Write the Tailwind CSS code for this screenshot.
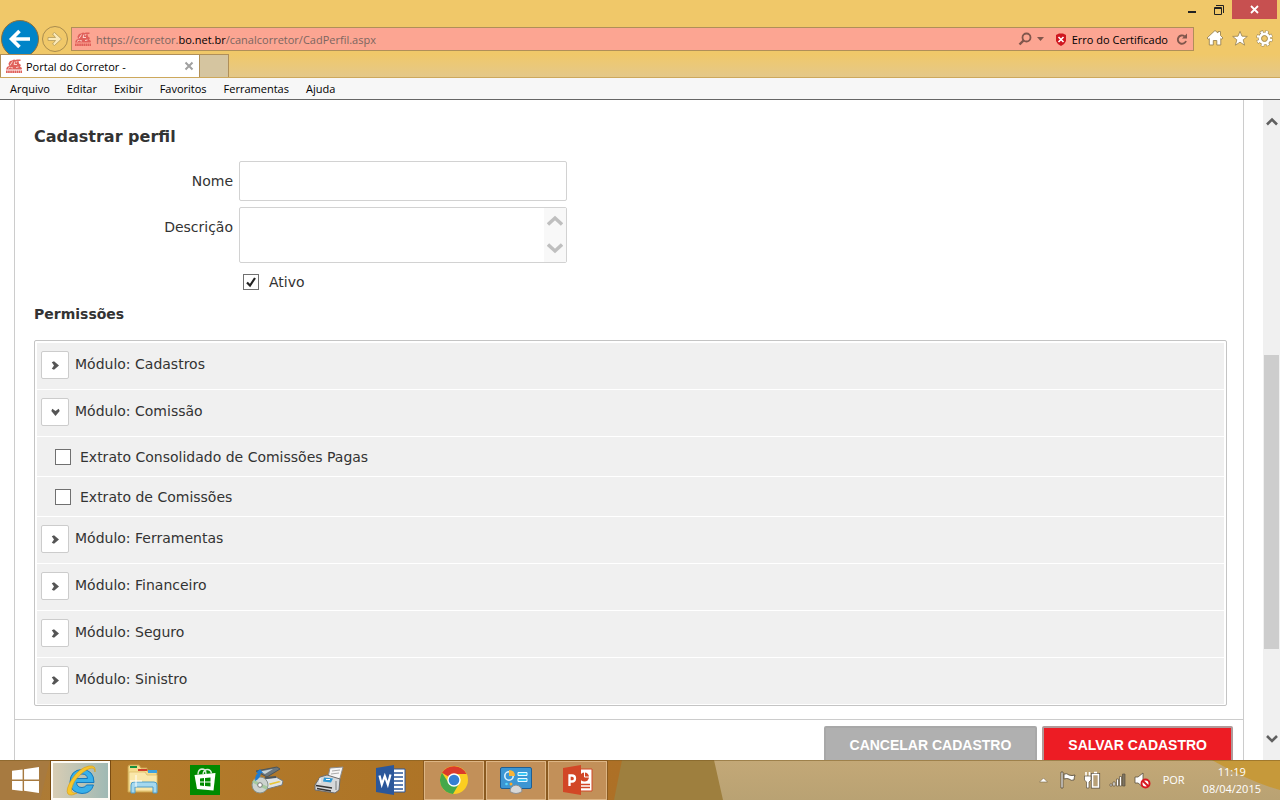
<!DOCTYPE html>
<html lang="pt-BR">
<head>
<meta charset="utf-8">
<title>Portal do Corretor -</title>
<script src="https://cdn.jsdelivr.net/npm/@tailwindcss/browser@4"></script>
</head>
<body class="h-screen flex flex-col overflow-hidden bg-white font-['Open_Sans',sans-serif] text-xs text-black">

<svg class="hidden" aria-hidden="true">
  <symbol id="lion" viewBox="0 0 16 15">
    <path d="M0 11L1 8.500 3 7.500 2.500 5 4 2.500 6 2 8 1 9.500 1.500 11 1H14.500V2.500H12.500L13 5 15 6.500 14 8 16 9.500 15.500 11Z" fill="#e0605a"/>
    <path d="M4 7L6.500 3M7 9.500L4.500 9M9 3L8 6 11 6M2 10L4 8.500M10 9L12.500 8.500M11 2.500L10.500 4" stroke="#fbd3cb" stroke-width="1" fill="none"/>
    <path d="M0 13.200H16" stroke="#e0605a" stroke-width="2.600" stroke-dasharray="1.700 .4"/>
  </symbol>
  <symbol id="chev-right" viewBox="0 0 9 9"><path d="M.8 1.300L3 .3 8 4.500 3 8.700 .8 7.700 3 4.500z" fill="#555"/></symbol>
  <symbol id="chev-down" viewBox="0 0 9 9"><path d="M1.300 .8L.3 3 4.500 8 8.700 3 7.700 .8 4.500 3z" fill="#555"/></symbol>
</svg>

<header class="shrink-0 bg-[#f0c869]">
  <div class="flex h-5 justify-end pr-[3px]">
    <button aria-label="Minimizar" class="w-[26px] flex items-center justify-center"><svg width="10" height="14" viewBox="0 0 10 14"><path d="M1 8h8v2H1z" fill="#222"/></svg></button>
    <button aria-label="Restaurar" class="w-[27px] flex items-center justify-center"><svg width="12" height="12" viewBox="0 0 12 12" fill="none" stroke="#222"><path d="M3 1.500h7.500V9"/><path d="M1.500 3.500h7V10.500h-7z"/><path d="M1 4.500h7"/></svg></button>
    <button aria-label="Fechar" class="w-[45px] h-[19px] bg-[#c75050] flex items-center justify-center"><svg width="9" height="9" viewBox="0 0 9 9"><path d="M1 1l7 7M8 1L1 8" stroke="#fff" stroke-width="1.800"/></svg></button>
  </div>
  <div class="flex h-[34px] items-center">
    <button aria-label="Voltar" class="w-10 h-[34px] shrink-0"><svg width="40" height="34" viewBox="0 0 40 34"><circle cx="20" cy="19" r="18.500" fill="#0084c8" stroke="#8a6f3c"/><path d="M30 19H12M19.500 11l-8 8 8 8" fill="none" stroke="#fff" stroke-width="3.600"/></svg></button>
    <button aria-label="Avançar" class="w-[31px] h-[34px] shrink-0"><svg width="31" height="34" viewBox="0 0 31 34"><circle cx="15" cy="19" r="12.500" fill="none" stroke="#a98c4e"/><path d="M8 17.500h7.500l-3-3.500 2-1.500 7 6.500-7 6.500-2-1.500 3-3.500H8z" fill="#fbe9b8" stroke="#b39a5c" stroke-width=".8"/></svg></button>
    <div class="mt-1 flex flex-1 h-6 items-center border border-[#b08f58] bg-[#fca592] pl-[3px] pr-[5px]">
      <svg class="w-4 h-4 shrink-0"><use href="#lion"/></svg>
      <div role="textbox" aria-label="Endereço" class="flex-1 ml-[5px] pt-px whitespace-nowrap text-[11px] leading-5 text-[#7b6660]">https://corretor.<span class="text-black">bo.net.br</span>/canalcorretor/CadPerfil.aspx</div>
      <button aria-label="Pesquisar" class="flex items-center gap-[5px]"><svg width="14" height="14" viewBox="0 0 14 14"><circle cx="8.500" cy="5.500" r="4" fill="none" stroke="#80564c" stroke-width="1.800"/><path d="M5.500 8.500L1.500 12.500" stroke="#80564c" stroke-width="2.400"/></svg><svg width="7" height="4" viewBox="0 0 7 4"><path d="M0 0h7L3.500 4z" fill="#80564c"/></svg></button>
      <svg class="ml-[11px] mr-[5px]" width="12" height="13" viewBox="0 0 12 13"><path d="M4 .5h4L11 2v6q-1 3-5 5-4-2-5-5V2z" fill="#cf1720"/><path d="M3.500 4l5 5M8.500 4l-5 5" stroke="#fff" stroke-width="1.600"/></svg>
      <a href="#" class="pt-px text-[11px] leading-5">Erro do Certificado</a>
      <button aria-label="Atualizar" class="ml-2"><svg width="12" height="13" viewBox="0 0 12 13"><path d="M8.500 3.200A4.200 4.200 0 1 0 10 8" fill="none" stroke="#80564c" stroke-width="1.900"/><path d="M6 5.500h5V.5z" fill="#80564c"/></svg></button>
    </div>
    <nav class="flex w-[86px] shrink-0 items-center gap-2 pl-3 pt-[2px]">
      <button aria-label="Início"><svg width="18" height="18" viewBox="0 0 18 18"><path d="M9 1.500L12 4V2.500h2.500V6.500L17 9l-1.200 1.300-1-.8V16h-4v-4.500H7.300V16h-4V9.500l-1 .8L1 9z" fill="#fff" stroke="#9b8552" stroke-width=".9"/></svg></button>
      <button aria-label="Favoritos"><svg width="16" height="17" viewBox="0 0 17 17"><path d="M8.500 .8l2.100 5.200 5.700.3-4.400 3.600 1.500 5.700-4.900-3.200-4.900 3.200 1.500-5.700L.7 6.300l5.700-.3z" fill="#fff" stroke="#9b8552" stroke-width=".9"/></svg></button>
      <button aria-label="Ferramentas"><svg width="17" height="17" viewBox="0 0 17 17"><circle cx="8.500" cy="8.500" r="6.300" fill="none" stroke="#9b8552" stroke-width="4" stroke-dasharray="3 1.950"/><circle cx="8.500" cy="8.500" r="4.800" fill="none" stroke="#9b8552" stroke-width="3.600"/><circle cx="8.500" cy="8.500" r="6.300" fill="none" stroke="#fff" stroke-width="3" stroke-dasharray="2.200 2.750" stroke-dashoffset="-.4"/><circle cx="8.500" cy="8.500" r="4.500" fill="none" stroke="#fff" stroke-width="2.800"/><circle cx="8.500" cy="8.500" r="2.900" fill="#f0c869" stroke="#9b8552" stroke-width=".8"/></svg></button>
    </nav>
  </div>
  <div class="flex h-6 border-b border-[#cda85c] bg-linear-to-b from-[#f0c869] to-[#e4c888]">
    <div class="flex w-[200px] items-center border border-b-0 border-[#b08f58] bg-white pl-[5px] pr-[5px]">
      <svg class="w-4 h-4 shrink-0"><use href="#lion"/></svg>
      <span class="ml-1 flex-1 pt-px text-[11px] leading-5">Portal do Corretor -</span>
      <button aria-label="Fechar guia"><svg width="10" height="10" viewBox="0 0 10 10"><path d="M1.500 1.500l7 7M8.500 1.500l-7 7" stroke="#a0a0a0" stroke-width="2"/></svg></button>
    </div>
    <button aria-label="Nova guia" class="w-[29px] border border-l-0 border-b-0 border-[#b08f58] bg-[#d5c5a0]"></button>
  </div>
  <nav class="flex h-[22px] items-center gap-[17px] border-b border-[#666] bg-[#f7f7f7] pl-[10px] pt-[2px] text-[11px]">
    <button>Arquivo</button><button>Editar</button><button>Exibir</button><button>Favoritos</button><button>Ferramentas</button><button>Ajuda</button>
  </nav>
</header>

<div class="flex min-h-0 flex-1">
  <main class="min-w-0 flex-1 overflow-hidden pl-[14px] pr-[19px] font-['DejaVu_Sans',sans-serif] text-sm text-[#333]">
    <form class="border-x border-[#ccc]">
      <div class="pl-[19px] pr-4 pt-[25px]">
        <h1 class="text-base leading-6 font-bold">Cadastrar perfil</h1>
        <div class="mt-3 flex gap-[6px]">
          <label for="nome" class="w-[199px] pt-[10px] text-right leading-5">Nome</label>
          <input id="nome" type="text" class="h-10 w-[328px] rounded-xs border border-[#d2d2d2] bg-white px-2">
        </div>
        <div class="mt-[6px] flex gap-[6px]">
          <label for="desc" class="w-[199px] pt-[10px] text-right leading-5">Descrição</label>
          <div class="relative w-[328px]">
            <textarea id="desc" class="block h-14 w-full resize-none overflow-hidden rounded-xs border border-[#d2d2d2] bg-white px-2 pr-6"></textarea>
            <div class="absolute right-px top-px bottom-px flex w-[22px] flex-col items-center justify-between bg-[#f8f8f8] py-[6px]" aria-hidden="true">
              <svg width="16" height="13" viewBox="0 0 16 13"><path d="M1 10.500L8 4l7 6.500" fill="none" stroke="#bfbfbf" stroke-width="3.400"/></svg>
              <svg width="16" height="13" viewBox="0 0 16 13"><path d="M1 1.500L8 8l7-6.500" fill="none" stroke="#bfbfbf" stroke-width="3.400"/></svg>
            </div>
          </div>
        </div>
        <div class="mt-[9px] flex items-center gap-[10px] pl-[209px]">
          <span class="relative block size-4">
            <input id="ativo" type="checkbox" checked class="block size-4 appearance-none border border-[#707070] bg-white">
            <svg class="pointer-events-none absolute inset-0" width="16" height="16" viewBox="0 0 16 16"><path d="M4 8.500l3 3 5-7.500" fill="none" stroke="#222" stroke-width="2.200"/></svg>
          </span>
          <label for="ativo" class="leading-5">Ativo</label>
        </div>
        <h2 class="mt-3 leading-5 font-bold">Permissões</h2>
        <div class="mt-4 flex flex-col gap-px rounded-xs border border-[#c4c4c4] bg-white px-[2px] pt-[2px] pb-px">
          <div class="flex h-[46px] items-start gap-[6px] bg-[#f0f0f0] pl-1"><button type="button" aria-label="Expandir Cadastros" class="mt-2 flex size-7 items-center justify-center rounded-xs border border-[#ccc] bg-white"><svg class="size-[9px]"><use href="#chev-right"/></svg></button><span class="pt-[11px] leading-5">Módulo: Cadastros</span></div>
          <div class="flex h-[46px] items-start gap-[6px] bg-[#f0f0f0] pl-1"><button type="button" aria-label="Recolher Comissão" class="mt-2 flex size-7 items-center justify-center rounded-xs border border-[#ccc] bg-white"><svg class="size-[9px]"><use href="#chev-down"/></svg></button><span class="pt-[11px] leading-5">Módulo: Comissão</span></div>
          <div class="flex h-[39px] items-center gap-[9px] bg-[#f0f0f0] pl-[18px]"><input id="p1" type="checkbox" class="size-4 appearance-none border border-[#707070] bg-white"><label for="p1" class="leading-5">Extrato Consolidado de Comissões Pagas</label></div>
          <div class="flex h-[39px] items-center gap-[9px] bg-[#f0f0f0] pl-[18px]"><input id="p2" type="checkbox" class="size-4 appearance-none border border-[#707070] bg-white"><label for="p2" class="leading-5">Extrato de Comissões</label></div>
          <div class="flex h-[46px] items-start gap-[6px] bg-[#f0f0f0] pl-1"><button type="button" aria-label="Expandir Ferramentas" class="mt-2 flex size-7 items-center justify-center rounded-xs border border-[#ccc] bg-white"><svg class="size-[9px]"><use href="#chev-right"/></svg></button><span class="pt-[11px] leading-5">Módulo: Ferramentas</span></div>
          <div class="flex h-[46px] items-start gap-[6px] bg-[#f0f0f0] pl-1"><button type="button" aria-label="Expandir Financeiro" class="mt-2 flex size-7 items-center justify-center rounded-xs border border-[#ccc] bg-white"><svg class="size-[9px]"><use href="#chev-right"/></svg></button><span class="pt-[11px] leading-5">Módulo: Financeiro</span></div>
          <div class="flex h-[46px] items-start gap-[6px] bg-[#f0f0f0] pl-1"><button type="button" aria-label="Expandir Seguro" class="mt-2 flex size-7 items-center justify-center rounded-xs border border-[#ccc] bg-white"><svg class="size-[9px]"><use href="#chev-right"/></svg></button><span class="pt-[11px] leading-5">Módulo: Seguro</span></div>
          <div class="flex h-[46px] items-start gap-[6px] bg-[#f0f0f0] pl-1"><button type="button" aria-label="Expandir Sinistro" class="mt-2 flex size-7 items-center justify-center rounded-xs border border-[#ccc] bg-white"><svg class="size-[9px]"><use href="#chev-right"/></svg></button><span class="pt-[11px] leading-5">Módulo: Sinistro</span></div>
        </div>
      </div>
      <div class="mt-[13px] flex justify-end gap-[5px] border-t border-[#ccc] pt-[6px] pr-[10px] pb-3 font-['Liberation_Sans',sans-serif] font-bold text-white">
        <button type="reset" class="h-[38px] rounded-xs border-2 border-[#a8a8a8] bg-[#b0b0b0] px-6">CANCELAR CADASTRO</button>
        <button type="submit" class="h-[38px] rounded-xs border-2 border-[#b09a9a] bg-[#ed1c24] px-6">SALVAR CADASTRO</button>
      </div>
    </form>
  </main>
  <div class="flex w-[17px] flex-col items-center bg-[#f0f0f0] py-4" aria-hidden="true">
    <svg width="12" height="10" viewBox="0 0 12 10"><path d="M1 8.500l5-5 5 5" fill="none" stroke="#606060" stroke-width="2.600"/></svg>
    <div class="flex w-full flex-1 flex-col px-px"><div class="flex-[229]"></div><div class="flex-[294] bg-[#cdcdcd]"></div><div class="flex-[85]"></div></div>
    <svg width="12" height="10" viewBox="0 0 12 10"><path d="M1 2l5 5 5-5" fill="none" stroke="#606060" stroke-width="2.600"/></svg>
  </div>
</div>

<footer class="relative isolate flex h-10 shrink-0 items-center text-white">
  <svg class="absolute inset-0 -z-10 h-full w-full" viewBox="0 0 1280 40" preserveAspectRatio="none">
    <defs>
      <linearGradient id="wood" x1="0" x2="1"><stop offset="0" stop-color="#a97a3a"/><stop offset=".2" stop-color="#b47c2c"/><stop offset=".6" stop-color="#ae7527"/><stop offset="1" stop-color="#ad7026"/></linearGradient>
      <linearGradient id="sand" x1="0" x2="0" y1="0" y2="1"><stop offset="0" stop-color="#c3a877"/><stop offset="1" stop-color="#b9a273"/></linearGradient>
    </defs>
    <path d="M0 0h622v40H0z" fill="url(#wood)"/><path d="M0 0h50L40 40H0z" fill="#a77a40"/>
    <path d="M622 0h94l8 40H614z" fill="#9e7f3e"/><path d="M714 0h566v40H723z" fill="url(#sand)"/>
    <path d="M1212 0h68v30q-30-8-68-30z" fill="#c6993a"/><path d="M0 .5h1280" stroke="#7a5a20" stroke-opacity=".5"/>
  </svg>

  <button aria-label="Iniciar" class="flex w-[51px] h-10 items-center justify-center"><svg width="27" height="26" viewBox="0 0 28 27"><path d="M0 4l11-1.500V13H0zM12.500 2.300L28 0v13H12.500zM0 14.500h11V25L0 23.500zM12.500 14.500H28V27l-15.500-2.300z" fill="#fff"/></svg></button>
  <button aria-label="Internet Explorer" class="flex h-[39px] w-[59px] items-center justify-center border-2 border-[#fdfaf4] bg-linear-to-r from-[#d8cdb4] to-[#9fb9b4] outline outline-[#7a4c12]">
    <svg width="32" height="32" viewBox="0 0 32 32"><path fill-rule="evenodd" d="M29 18.500H11.500q.5 5 5.500 5 3.500 0 4.500-2.500h7Q26 29.500 17 29.500 5.500 29 5 18 5.500 6 17 5.500q12 .5 12 13zM11.500 14.500h11q-.5-4.500-5.500-4.500t-5.500 4.500z" fill="#38b0ea" stroke="#1579bd"/><path d="M30 8q1.500-7-6-6Q14 4 7 15 0 26 3 30q3 2.500 9-1-6 1-5.500-4 1.500-8 9-14.500Q23 4 27 4q3 0 3 4z" fill="#f7c52b" stroke="#d99b12" stroke-width=".6"/></svg></button>
  <button aria-label="Explorador de Arquivos" class="flex w-[66px] items-center justify-center"><svg width="34" height="32" viewBox="0 0 34 32"><path d="M2 3q0-2 2-2h9l2 3h6v3h10v21H2z" fill="#f5dc8c" stroke="#c9a14c"/><path d="M4 2h7v2H4z" fill="#15913c"/><path d="M12 5h9v2h-9z" fill="#d0402b"/><path d="M22 6h9v3h-9z" fill="#3da2df"/><path d="M3 8h16l2 3h10v16H3z" fill="#fae7a9" stroke="#dab763" stroke-width=".7"/><path d="M5 29V21q0-3 3-3h20q3 0 3 3v8h-4v-6H9v6z" fill="#a5d8ef" stroke="#4e9cc7"/><path d="M10 11v12M4 17h12" stroke="#fff"/></svg></button>
  <button aria-label="Loja" class="flex w-[58px] items-center justify-center"><svg width="30" height="30" viewBox="0 0 30 30"><path d="M0 0h30v30H0z" fill="#008a00"/><path d="M4.500 10l21-2-2 17.500L7 24z" fill="#fff"/><path d="M8 9.500q0-5 4-5.500 4 0 4 5M13 9q1-5 5-4.500 3 .5 3.500 4" fill="none" stroke="#d7eed7" stroke-width="1.400"/><path d="M10 13.500l4-.4V16.500h-4zM15 13l5.500-.5v4H15zM10 17.500h4v3.500l-4-.4zM15 17.500h5.500v4l-5.500-.4z" fill="#008a00"/></svg></button>
  <button aria-label="Gravador e scanner" class="flex w-[66px] items-center justify-center"><svg width="34" height="30" viewBox="0 0 34 30"><path d="M6 6L27 2l3 2-13 8z" fill="#6b767c" stroke="#4b555b"/><path d="M10 6.500l13-2.500-8 5z" fill="#c7d4d8"/><path d="M14 14l12-2 7 4-1 4-15 4-6-4z" fill="#dfe3e5" stroke="#737b80"/><path d="M19 18.500l10-2.500 2 1-11 3z" fill="#e8c536"/><path d="M15 13l11-1" stroke="#4b555b" stroke-width="2"/><circle cx="10" cy="20" r="8" fill="#ccd3cf" stroke="#87918d"/><path d="M10 20L3 16M10 20l7 3" stroke="#a5c9a0" stroke-width="3"/><circle cx="10" cy="20" r="2.300" fill="#fff" stroke="#777"/><path d="M5 16q0-6 3-8H6l4-4 3 4h-2q-1 6-6 8z" fill="#1d7cd2"/></svg></button>
  <button aria-label="Fax" class="flex w-[58px] items-center justify-center"><svg width="32" height="28" viewBox="0 0 32 28"><path d="M17 2l13-1-4 15H14z" fill="#f6f6f6" stroke="#8c8c8c"/><path d="M19 5l8-1M18 8l8-1" stroke="#aaa"/><path d="M7 11l7-2 13 4-1 11-4 3L2 24v-5z" fill="#d6d8da" stroke="#6d6d6d"/><path d="M11 11.500l9 1-2 4-8-1z" fill="#2c98d6"/><path d="M7 12v5M13 13.500h4" stroke="#fff"/><path d="M3 19.500l16 2.500M4 22.500l14 2.500" stroke="#333" stroke-width="1.400"/><path d="M23 15v9" stroke="#a8abad" stroke-width="2"/></svg></button>
  <button aria-label="Word" class="flex w-[65px] items-center justify-center"><svg width="32" height="30" viewBox="0 0 32 30"><path d="M17 4h13v23H17z" fill="#fff" stroke="#2b579a"/><path d="M18 8h10M18 12h10M18 16h10M18 20h10M18 24h10" stroke="#2b579a" stroke-width="1.600"/><path d="M1 3l18-3v30L1 27z" fill="#2b579a"/><path d="M4.500 10.500l2.300 9 3-8.500 3 8.500 2.700-10" fill="none" stroke="#fff" stroke-width="2.200"/></svg></button>
  <button aria-label="Chrome" class="ml-px flex h-[39px] w-[60px] items-center justify-center border border-[#ddb584] bg-[#c29059] outline outline-[#8a5a20]"><svg width="28" height="28" viewBox="0 0 28 28"><circle cx="14" cy="14" r="14" fill="#fbce21"/><path d="M14 14L2 6.800A14 14 0 0 1 26.500 8H14z" fill="#db3b2b"/><path d="M2 6.800A14 14 0 0 0 13 28l6.500-11L14 14 8.700 17z" fill="#45a84a"/><circle cx="14" cy="14" r="6.700" fill="#fff"/><circle cx="14" cy="14" r="5.300" fill="#357fd3"/></svg></button>
  <button aria-label="Painel de Controle" class="ml-[2px] flex h-[39px] w-[60px] items-center justify-center border border-[#ddb584] bg-[#c29059] outline outline-[#8a5a20]"><svg width="32" height="28" viewBox="0 0 32 28"><rect x=".5" y="1.500" width="31" height="21" rx="1.500" fill="#3c96d3" stroke="#1f5e92"/><circle cx="9" cy="10" r="4.200" fill="none" stroke="#d9f0ff" stroke-width="1.600"/><path d="M9 10V4q6 0 6 6z" fill="#f7b338"/><path d="M18 6.500h9v3h-9zM18 12.500h9v3h-9z" fill="#38c5f4" stroke="#e7f8ff"/><circle cx="6.500" cy="18" r="1.300" fill="#59dbff"/><circle cx="11" cy="18" r="1.500" fill="#ffa928"/><path d="M10 25.500q0-5.500 6-6.500 6 1 6 6.500-6 4-12 0z" fill="#d8d8d8" stroke="#8f8f8f"/></svg></button>
  <button aria-label="PowerPoint" class="ml-[2px] flex h-[39px] w-[59px] items-center justify-center border border-[#ddb584] bg-[#c29059] outline outline-[#8a5a20]"><svg width="30" height="30" viewBox="0 0 30 30"><path d="M16 4h13v22H16z" fill="#fff" stroke="#d24726"/><circle cx="21.500" cy="12" r="4.500" fill="#d24726"/><path d="M21.500 7v5h5" stroke="#fff" fill="none"/><path d="M18 19.500h9M18 22.500h9" stroke="#d24726" stroke-width="1.400"/><path d="M0 3l18-3v30L0 27z" fill="#d24726"/><path d="M6.500 21V10.500H9q3 0 3 3t-3 3H7" fill="none" stroke="#fff" stroke-width="2.300"/></svg></button>

  <div class="ml-auto flex h-full items-center">
    <button aria-label="Mostrar ícones ocultos" class="mr-3"><svg width="9" height="6" viewBox="0 0 9 6"><path d="M.5 5L4.500 1l4 4z" fill="#fff" stroke="#7a6a4a" stroke-width=".6"/></svg></button>
    <svg class="mr-2" width="16" height="18" viewBox="0 0 16 18"><path d="M1 1h2v16H1zM4 3q3-1 5 1 3 1 6 0-1 3-1 5-3 1-5-1-2-1-5 0z" fill="#fff" stroke="#5b5140" stroke-width=".9"/></svg>
    <svg class="mr-2" width="17" height="18" viewBox="0 0 17 18"><path d="M8.500 3.500h6V16h-6z" fill="#b8a077" stroke="#5b5140" stroke-width="3.200"/><path d="M8.500 3.500h6V16h-6z" fill="#b8a077" stroke="#fff" stroke-width="1.600"/><path d="M10 1.500h3" stroke="#fff" stroke-width="1.500"/><path d="M2 1v4M5.500 1v4" stroke="#fff" stroke-width="1.600"/><path d="M.5 5h6.500v4l-2 2v6H2.500v-6l-2-2z" fill="#fff" stroke="#5b5140" stroke-width=".7"/></svg>
    <svg class="mr-2" width="17" height="14" viewBox="0 0 17 14"><path d="M1 13v-2h2v2zM4 13V9h2v4zM7.500 13V6h2v7zM10.500 13V3.500h2V13z" fill="#fff" stroke="#5b5140" stroke-width=".7"/><path d="M13.500 13V1h2.500v12z" fill="#7d7462" stroke="#5b5140" stroke-width=".7"/></svg>
    <svg class="mr-3" width="17" height="17" viewBox="0 0 17 17"><path d="M1 5h3l5-4v14l-5-4H1z" fill="#fff" stroke="#5b5140" stroke-width=".8"/><circle cx="11.500" cy="11.500" r="4" fill="#fff" stroke="#d71920" stroke-width="2"/><path d="M8.700 8.700l5.600 5.600" stroke="#d71920" stroke-width="2"/></svg>
    <button class="mr-[18px] text-[11px]">POR</button>
    <button class="mr-[19px] text-center text-[11px] leading-[17px]">11:19<br>08/04/2015</button>
  </div>
</footer>
</body>
</html>
